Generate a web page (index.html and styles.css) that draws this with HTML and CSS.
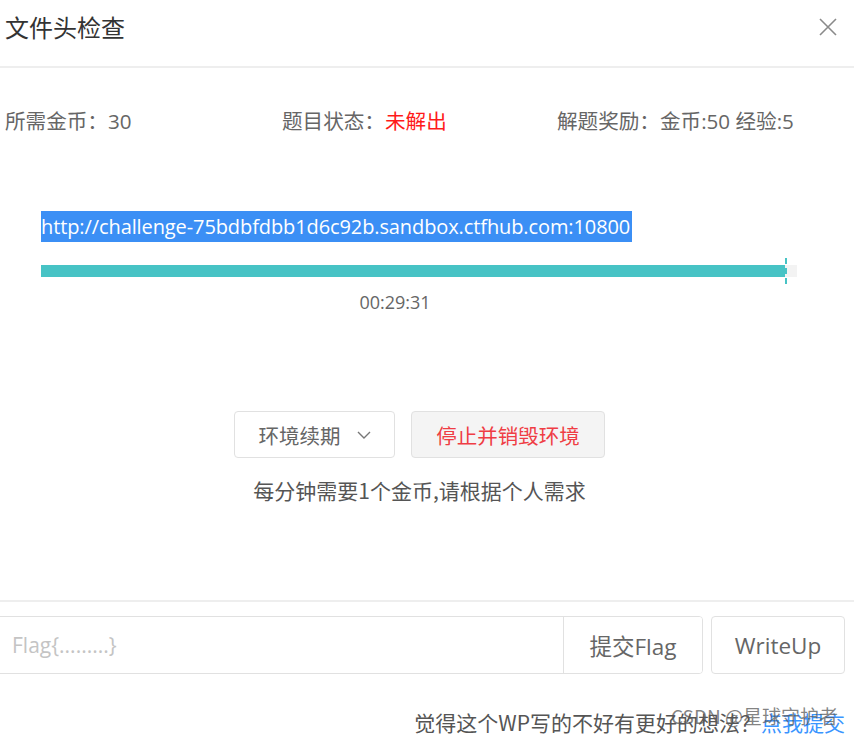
FILE: index.html
```html
<!DOCTYPE html>
<html lang="zh">
<head>
<meta charset="utf-8">
<title>文件头检查</title>
<link rel="stylesheet" href="styles.css">
</head>
<body>
<div class="modal">
  <header class="modal-header">
    <h1 class="modal-title">文件头检查</h1>
    <button class="close" aria-label="关闭">
      <svg width="18" height="18" viewBox="0 0 18 18"><path d="M1 1L17 17M17 1L1 17" stroke="#8a8a8a" stroke-width="1.6" fill="none"/></svg>
    </button>
  </header>
  <section class="info">
    <div class="info-item">所需金币：30</div>
    <div class="info-item">题目状态：<span class="red">未解出</span></div>
    <div class="info-item">解题奖励：金币:50 经验:5</div>
  </section>
  <section class="env">
    <div class="url-line"><span class="url">http://challenge-75bdbfdbb1d6c92b.sandbox.ctfhub.com:10800</span></div>
    <div class="progress">
      <div class="track"><div class="fill" style="width:98.4%"></div><span class="marker"></span></div>
    </div>
    <div class="time">00:29:31</div>
  </section>
  <section class="actions">
    <div class="btns">
      <button class="btn renew">环境续期 <svg width="14" height="10" viewBox="0 0 14 10"><path d="M1 2L7 8L13 2" stroke="#777" stroke-width="1.4" fill="none"/></svg></button>
      <button class="btn stop">停止并销毁环境</button>
    </div>
    <p class="note">每分钟需要1个金币,请根据个人需求</p>
  </section>
  <section class="submit">
    <div class="input-group">
      <input class="flag" type="text" placeholder="Flag{.........}">
      <button class="addon">提交Flag</button>
    </div>
    <button class="btn writeup">WriteUp</button>
  </section>
  <footer class="foot">
    <span>觉得这个WP写的不好有更好的想法？<a class="link">点我提交</a></span>
    <span class="watermark">CSDN @星球守护者</span>
  </footer>
</div>
</body>
</html>
```
FILE: styles.css
```css
html, body {
  margin: 0;
  padding: 0;
  background: #fff;
}
body {
  font-family: "Open Sans", "Noto Sans CJK SC", sans-serif;
  color: #666;
  overflow: hidden;
}
.modal {
  width: 854px;
  height: 734px;
  position: relative;
}
.modal-header {
  height: 66px;
  border-bottom: 2px solid #eeeeee;
  display: flex;
  align-items: center;
  justify-content: space-between;
  padding: 0 17px 0 5px;
  box-sizing: content-box;
}
.modal-title {
  margin: 0;
  font-family: "Noto Sans CJK SC", sans-serif;
  font-weight: 400;
  font-size: 24px;
  color: #333;
  position: relative;
  top: -7px;
}
.close {
  border: 0;
  background: none;
  padding: 0;
  position: relative;
  top: -6px;
  display: flex;
}
.info {
  display: grid;
  grid-template-columns: 277px 275px 1fr;
  padding: 38px 0 0 5px;
  height: 30px;
  font-size: 20.6px;
  line-height: 30px;
  color: #666;
}
.red { color: #ff1a1a; }
.env {
  padding: 75px 0 0 41px;
}
.url-line {
  height: 31px;
}
.url {
  display: inline-block;
  background: #3b8ff5;
  color: #fff;
  font-size: 20px;
  line-height: 31px;
  height: 31px;
  letter-spacing: -0.1px;
  padding-right: 2px;
}
.progress {
  padding-top: 23px;
  width: 756px;
}
.track {
  height: 12px;
  background: #f3f3f3;
  position: relative;
}
.fill {
  height: 12px;
  background: #47c3c5;
}
.marker {
  position: absolute;
  left: 744px;
  top: -7px;
  height: 26px;
  border-left: 2px dashed #47c3c5;
}
.time {
  width: 708px;
  text-align: center;
  font-size: 18px;
  line-height: 26px;
  margin-top: 12px;
  color: #666;
}
.actions {
  padding-top: 96px;
  padding-right: 15px;
  display: flex;
  flex-direction: column;
  align-items: center;
}
.btns {
  display: flex;
  gap: 16px;
}
.btn {
  font-family: "Noto Sans CJK SC", sans-serif;
  font-size: 20.5px;
  height: 47px;
  border-radius: 4px;
  border: 1px solid #e1e1e1;
  background: #fff;
  color: #666;
  padding: 0;
  display: flex;
  align-items: center;
  justify-content: center;
  gap: 16px;
}
.renew { width: 161px; }
.stop {
  width: 194px;
  background: #f4f4f4;
  color: #ef3d44;
}
.note {
  margin: 16px 0 0 0;
  font-family: "Noto Sans CJK SC", sans-serif;
  font-size: 21px;
  line-height: 32px;
  color: #555;
}
.submit {
  margin-top: 94px;
  border-top: 2px solid #eeeeee;
  padding-top: 14px;
  display: flex;
  gap: 8px;
  margin-left: -6px;
}
.input-group {
  display: flex;
  width: 709px;
  height: 58px;
  border: 1px solid #e1e1e1;
  border-radius: 4px;
  box-sizing: border-box;
  overflow: hidden;
}
.flag {
  flex: 1;
  border: 0;
  outline: none;
  padding: 0 0 0 17px;
  font-family: "Open Sans", sans-serif;
  font-size: 21px;
  color: #333;
}
.flag::placeholder { color: #c4c4c4; }
.addon {
  width: 139px;
  border: 0;
  border-left: 1px solid #e1e1e1;
  background: #fff;
  font-family: "Open Sans", "Noto Sans CJK SC", sans-serif;
  font-size: 22.5px;
  color: #666;
  padding: 0;
}
.writeup {
  width: 134px;
  height: 58px;
  font-family: "Open Sans", sans-serif;
  font-size: 22.5px;
}
.foot {
  position: relative;
  text-align: right;
  padding: 33px 9px 0 0;
  font-family: "Noto Sans CJK SC", sans-serif;
  font-size: 21px;
  line-height: 30px;
  color: #555;
}
.link { color: #3a95ff; }
.watermark {
  position: absolute;
  right: 16px;
  top: 27px;
  font-size: 19px;
  color: rgba(90, 90, 90, 0.75);
  white-space: nowrap;
}
```
